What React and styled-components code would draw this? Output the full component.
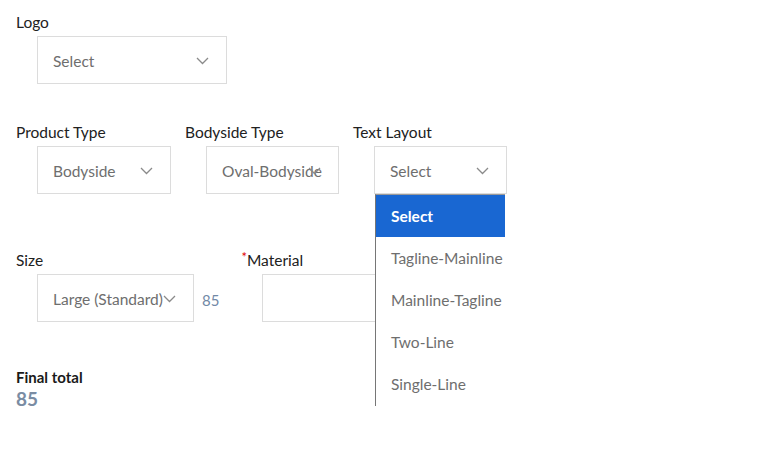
import React from 'react'
import { styled, createGlobalStyle } from 'styled-components'

const GlobalStyle = createGlobalStyle`
    body{
        margin: 0;
        font-family: "Lato", "Liberation Sans", sans-serif;
        background: #fff;
        color: #212121;
    }
`

const textLayouts = ["Select", "Tagline-Mainline", "Mainline-Tagline", "Two-Line", "Single-Line"]

const Chevron = () => (
    <ChevronIcon width="13" height="8" viewBox="0 0 13 8">
        <polyline points="1,1 6.5,6.5 12,1" fill="none" stroke="#8a8a8a" strokeWidth="1.3" />
    </ChevronIcon>
)

const SelectField = ({ label, value, width, required, children }) => (
    <Field>
        <Label>
            {required && <Star>*</Star>}
            {label}
        </Label>
        <Box width={width}>
            {value && <span>{value}</span>}
            {value && <Chevron />}
            {children}
        </Box>
    </Field>
)

const App = () => {
    return (
        <Wrapper>
            <GlobalStyle />
            <Row>
                <SelectField label="Logo" value="Select" width={190} />
            </Row>
            <Row className="second">
                <SelectField label="Product Type" value="Bodyside" width={134} />
                <SelectField label="Bodyside Type" value="Oval-Bodyside" width={133} />
                <SelectField label="Text Layout" value="Select" width={133}>
                    <Menu>
                        {textLayouts.map((item, i) => (
                            <Option key={item} active={i === 0}>{item}</Option>
                        ))}
                    </Menu>
                </SelectField>
            </Row>
            <Row className="third">
                <SelectField label="Size" value="Large (Standard)" width={157} />
                <Price>85</Price>
                <SelectField label="Material" required width={134} />
            </Row>
            <Total>
                <h4>Final total</h4>
                <strong>85</strong>
            </Total>
        </Wrapper>
    )
}

export default App


const Wrapper = styled.section`
    padding: 10px 16px;
`
const Row = styled.div`
    display: flex;
    align-items: flex-start;
    gap: 14px;

    &.second{
        margin-top: 36px;
    }
    &.third{
        margin-top: 54px;
        gap: 0;
    }
`
const Field = styled.div`
    display: flex;
    flex-direction: column;
`
const Label = styled.label`
    font-size: 15.5px;
    line-height: 24px;
    color: #212121;
    margin-bottom: 2px;
`
const Star = styled.span`
    color: #e00000;
    font-size: 13px;
    vertical-align: top;
    line-height: 18px;
`
const Box = styled.div`
    position: relative;
    box-sizing: border-box;
    width: ${({ width }) => `${width}px`};
    height: 48px;
    margin-left: 21px;
    padding: 2px 15px 0;
    border: 1px solid #dcdcdc;
    display: flex;
    align-items: center;
    white-space: nowrap;

    span{
        font-size: 15.5px;
        color: #6e6e6e;
    }
`
const ChevronIcon = styled.svg`
    position: absolute;
    right: 17px;
    top: 20px;
`
const Price = styled.span`
    margin: 43px 22px 0 8px;
    font-size: 15px;
    color: #7189a6;
`
const Menu = styled.ul`
    position: absolute;
    z-index: 10;
    top: 47px;
    left: 0;
    width: 130px;
    height: 212px;
    margin: 0;
    padding: 0;
    list-style: none;
    overflow: hidden;
    background: #fff;
    border-left: 1px solid #767676;
    border-top: 1px solid #9a9a9a;
    box-sizing: border-box;
`
const Option = styled.li`
    height: 42px;
    padding-left: 15px;
    display: flex;
    align-items: center;
    font-size: 15.5px;
    white-space: nowrap;
    color: ${({ active }) => active ? "#fff" : "#6e6e6e"};
    font-weight: ${({ active }) => active ? 700 : 400};
    background: ${({ active }) => active ? "#1967d2" : "#fff"};
`
const Total = styled.div`
    margin-top: 45px;

    h4{
        margin: 0;
        font-size: 15px;
        line-height: 20px;
        font-weight: 700;
        color: #1a1a1a;
    }
    strong{
        display: block;
        font-size: 19px;
        line-height: 24px;
        color: #7a8ca3;
    }
`
